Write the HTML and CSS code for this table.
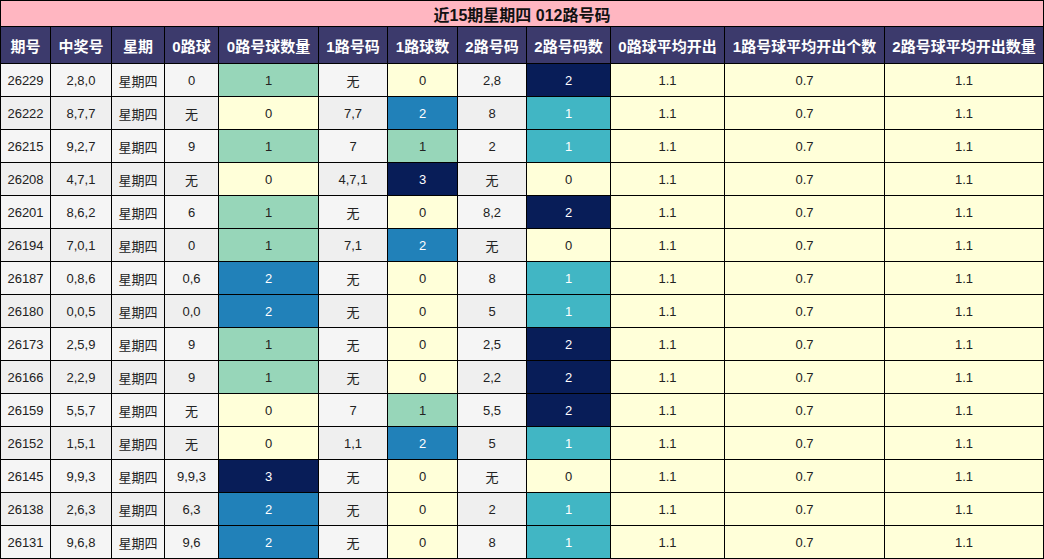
FILE: index.html
```html
<!DOCTYPE html>
<html lang="zh">
<head>
<meta charset="utf-8">
<title>近15期星期四 012路号码</title>
<link rel="stylesheet" href="styles.css">
</head>
<body>
<table class="grid">
  <colgroup>
    <col class="c1"><col class="c2"><col class="c3"><col class="c4"><col class="c5"><col class="c6">
    <col class="c7"><col class="c8"><col class="c9"><col class="c10"><col class="c11"><col class="c12">
  </colgroup>
  <thead>
    <tr class="title-row"><th colspan="12" class="title">近15期星期四 012路号码</th></tr>
    <tr class="head-row">
      <th>期号</th><th>中奖号</th><th>星期</th><th>0路球</th><th>0路号球数量</th><th>1路号码</th>
      <th>1路球数</th><th>2路号码</th><th>2路号码数</th><th>0路球平均开出</th><th>1路号球平均开出个数</th><th>2路号球平均开出数量</th>
    </tr>
  </thead>
  <tbody>
    <tr class="odd"><td>26229</td><td>2,8,0</td><td>星期四</td><td>0</td><td class="h1">1</td><td>无</td><td class="h0">0</td><td>2,8</td><td class="h3">2</td><td class="avg">1.1</td><td class="avg">0.7</td><td class="avg">1.1</td></tr>
    <tr class="even"><td>26222</td><td>8,7,7</td><td>星期四</td><td>无</td><td class="h0">0</td><td>7,7</td><td class="h2">2</td><td>8</td><td class="hh">1</td><td class="avg">1.1</td><td class="avg">0.7</td><td class="avg">1.1</td></tr>
    <tr class="odd"><td>26215</td><td>9,2,7</td><td>星期四</td><td>9</td><td class="h1">1</td><td>7</td><td class="h1">1</td><td>2</td><td class="hh">1</td><td class="avg">1.1</td><td class="avg">0.7</td><td class="avg">1.1</td></tr>
    <tr class="even"><td>26208</td><td>4,7,1</td><td>星期四</td><td>无</td><td class="h0">0</td><td>4,7,1</td><td class="h3">3</td><td>无</td><td class="h0">0</td><td class="avg">1.1</td><td class="avg">0.7</td><td class="avg">1.1</td></tr>
    <tr class="odd"><td>26201</td><td>8,6,2</td><td>星期四</td><td>6</td><td class="h1">1</td><td>无</td><td class="h0">0</td><td>8,2</td><td class="h3">2</td><td class="avg">1.1</td><td class="avg">0.7</td><td class="avg">1.1</td></tr>
    <tr class="even"><td>26194</td><td>7,0,1</td><td>星期四</td><td>0</td><td class="h1">1</td><td>7,1</td><td class="h2">2</td><td>无</td><td class="h0">0</td><td class="avg">1.1</td><td class="avg">0.7</td><td class="avg">1.1</td></tr>
    <tr class="odd"><td>26187</td><td>0,8,6</td><td>星期四</td><td>0,6</td><td class="h2">2</td><td>无</td><td class="h0">0</td><td>8</td><td class="hh">1</td><td class="avg">1.1</td><td class="avg">0.7</td><td class="avg">1.1</td></tr>
    <tr class="even"><td>26180</td><td>0,0,5</td><td>星期四</td><td>0,0</td><td class="h2">2</td><td>无</td><td class="h0">0</td><td>5</td><td class="hh">1</td><td class="avg">1.1</td><td class="avg">0.7</td><td class="avg">1.1</td></tr>
    <tr class="odd"><td>26173</td><td>2,5,9</td><td>星期四</td><td>9</td><td class="h1">1</td><td>无</td><td class="h0">0</td><td>2,5</td><td class="h3">2</td><td class="avg">1.1</td><td class="avg">0.7</td><td class="avg">1.1</td></tr>
    <tr class="even"><td>26166</td><td>2,2,9</td><td>星期四</td><td>9</td><td class="h1">1</td><td>无</td><td class="h0">0</td><td>2,2</td><td class="h3">2</td><td class="avg">1.1</td><td class="avg">0.7</td><td class="avg">1.1</td></tr>
    <tr class="odd"><td>26159</td><td>5,5,7</td><td>星期四</td><td>无</td><td class="h0">0</td><td>7</td><td class="h1">1</td><td>5,5</td><td class="h3">2</td><td class="avg">1.1</td><td class="avg">0.7</td><td class="avg">1.1</td></tr>
    <tr class="even"><td>26152</td><td>1,5,1</td><td>星期四</td><td>无</td><td class="h0">0</td><td>1,1</td><td class="h2">2</td><td>5</td><td class="hh">1</td><td class="avg">1.1</td><td class="avg">0.7</td><td class="avg">1.1</td></tr>
    <tr class="odd"><td>26145</td><td>9,9,3</td><td>星期四</td><td>9,9,3</td><td class="h3">3</td><td>无</td><td class="h0">0</td><td>无</td><td class="h0">0</td><td class="avg">1.1</td><td class="avg">0.7</td><td class="avg">1.1</td></tr>
    <tr class="even"><td>26138</td><td>2,6,3</td><td>星期四</td><td>6,3</td><td class="h2">2</td><td>无</td><td class="h0">0</td><td>2</td><td class="hh">1</td><td class="avg">1.1</td><td class="avg">0.7</td><td class="avg">1.1</td></tr>
    <tr class="odd"><td>26131</td><td>9,6,8</td><td>星期四</td><td>9,6</td><td class="h2">2</td><td>无</td><td class="h0">0</td><td>8</td><td class="hh">1</td><td class="avg">1.1</td><td class="avg">0.7</td><td class="avg">1.1</td></tr>
  </tbody>
</table>
</body>
</html>
```

FILE: styles.css
```css
html, body {
  margin: 0;
  padding: 0;
  background: #ffffff;
}

.grid {
  border-collapse: collapse;
  table-layout: fixed;
  width: 1043px;
  font-family: "Liberation Sans", "Noto Sans CJK SC", sans-serif;
  font-size: 13px;
  color: #222222;
}

.c1 { width: 50px; }
.c2 { width: 61px; }
.c3 { width: 53px; }
.c4 { width: 54px; }
.c5 { width: 100px; }
.c6 { width: 69px; }
.c7 { width: 70px; }
.c8 { width: 69px; }
.c9 { width: 84px; }
.c10 { width: 114px; }
.c11 { width: 160px; }
.c12 { width: 159px; }

.grid th,
.grid td {
  border: 1px solid #000000;
  padding: 0;
  text-align: center;
  vertical-align: middle;
  white-space: nowrap;
  overflow: hidden;
}

.title-row { height: 26px; }

.title {
  background: #ffb6c1;
  color: #111111;
  font-size: 16px;
  font-weight: bold;
  border-bottom: 2px solid #000000;
}

.head-row { height: 37px; }

.head-row th {
  background: #3c3a6c;
  color: #ffffff;
  font-size: 15px;
  font-weight: bold;
}

.grid tbody tr { height: 33px; }

.odd td { background: #f5f5f5; }
.even td { background: #efefef; }

.grid td.avg { background: #ffffd9; }
.grid td.h0 { background: #ffffd9; }
.grid td.h1 { background: #97d6b9; }
.grid td.h2 { background: #2181b9; color: #ffffff; }
.grid td.hh { background: #41b6c4; color: #ffffff; }
.grid td.h3 { background: #081d58; color: #ffffff; }
```
